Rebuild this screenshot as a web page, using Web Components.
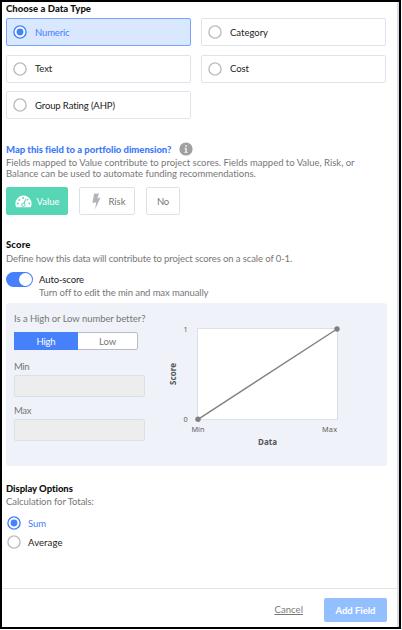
<!DOCTYPE html>
<html lang="en">
<head>
<meta charset="utf-8">
<title>Data field</title>
<style>
html,body{margin:0;height:100%;overflow:hidden;background:#fff}
</style>
</head>
<body>
<field-dialog></field-dialog>
<script>
function define(name, css, html, setup) {
  customElements.define(name, class extends HTMLElement {
    connectedCallback() {
      if (this.shadowRoot) return;
      const root = this.attachShadow({ mode: 'open' });
      root.innerHTML = '<style>:host,*{box-sizing:border-box}' + css + '</style>' + html;
      if (setup) setup(this, root);
    }
  });
}

// One line of text whose tracking is adjusted so that it spans the width in "w".
define('ui-text',
  ':host{display:block;white-space:nowrap;flex:none}span{display:inline-block;text-decoration:inherit}',
  '<span></span>',
  (host, root) => {
    const span = root.querySelector('span');
    span.textContent = host.getAttribute('label');
    const w = parseFloat(host.getAttribute('w'));
    if (w) {
      const natural = span.getBoundingClientRect().width;
      span.style.letterSpacing = ((w - natural) / span.textContent.length) + 'px';
    }
  });

define('ui-radio',
  `:host{display:block;flex:none;width:14px;height:14px}
   svg{display:block}
   circle{fill:#fff;stroke:#bcbcbc;stroke-width:1.4}
   .dot{display:none}
   :host([checked]) circle{stroke:#4680fb}
   :host([checked]) .dot{display:block;fill:#4680fb;stroke:none}`,
  '<svg width="14" height="14" viewBox="0 0 14 14"><circle cx="7" cy="7" r="6.1"/><circle class="dot" cx="7" cy="7" r="3.4"/></svg>');

define('type-option',
  `:host{display:flex;align-items:center;height:28px;border:1px solid #dde4eb;border-radius:2px;background:#fff;padding:0 0 0 6px;gap:8px;color:#222}
   :host([checked]){border-color:#75a5fb;background:#d9e8ff;color:#4680fb}`,
  '<ui-radio></ui-radio><slot></slot>',
  (host, root) => { if (host.hasAttribute('checked')) root.querySelector('ui-radio').setAttribute('checked', ''); });

define('dimension-button',
  `:host{display:flex;align-items:center;justify-content:center;height:28px;border:1px solid #dde1e8;border-radius:2px;background:#fff;color:#777;flex:none}
   :host([selected]){background:#57d6b6;border-color:#57d6b6;color:#fff}`,
  '<slot></slot>');

define('gauge-icon', ':host{display:block;flex:none}svg{display:block}',
  `<svg width="17" height="13" viewBox="0 0 17 13"><path fill="#fff" d="M8.500.6A8 8 0 0 0 .4 8.600Q.4 10.700 1.300 12.200H15.700Q16.600 10.700 16.600 8.600A8 8 0 0 0 8.500.6Z"/>
   <g fill="#57d6b6"><circle cx="2.800" cy="8.500" r=".9"/><circle cx="4.200" cy="5" r=".9"/><circle cx="8.100" cy="3" r=".9"/><circle cx="12.500" cy="4.700" r=".9"/><circle cx="14.300" cy="8.500" r=".9"/></g>
   <path d="M10.500 4.400L8.800 9.200" stroke="#57d6b6" stroke-width="1.100"/><circle cx="8.400" cy="9.800" r="1.700" fill="#fff" stroke="#57d6b6" stroke-width="1"/></svg>`);

define('bolt-icon', ':host{display:block;flex:none}svg{display:block}',
  '<svg width="9" height="17" viewBox="0 0 9 17"><path fill="#b4b4b8" d="M2 .7L7 .5 5.300 5.200 8.500 4.600 3.100 16.300 4.200 9.300.5 10Z"/></svg>');

define('info-icon', ':host{display:block;flex:none}svg{display:block}',
  '<svg width="14" height="14" viewBox="0 0 14 14"><circle cx="7" cy="7" r="6.600" fill="#a0a0a0"/><path fill="#dedede" d="M6 2.900h2v1.900H6zM5.400 5.700H8v4.300h.8v1H5.300v-1H6V6.800h-.6z"/></svg>');

define('ui-switch',
  `:host{display:flex;justify-content:flex-end;width:27px;height:15px;border-radius:8px;background:#4680fb;padding:1px;flex:none}
   i{width:13px;height:13px;border-radius:50%;background:#fff}`,
  '<i></i>');

define('segmented-control',
  `:host{display:flex;width:124px;height:18px;border:1px solid #b9bcc2;border-radius:2px;background:#fff;color:#777}
   ::slotted(*){display:flex;align-items:center;justify-content:center;flex:1}
   ::slotted([on]){background:#4680fb;color:#fff;flex:none;width:64px;margin:-1px 0 -1px -1px}`,
  '<slot></slot>');

define('number-field',
  `:host{display:block;color:#777}
   div{height:22px;width:131px;margin-top:3px;background:#ededed;border:1px solid #dae0e4;border-radius:2px}`,
  '<slot></slot><div></div>');

define('score-chart',
  `:host{display:block;flex:none}svg{display:block;font-family:"Noto Sans","Open Sans",sans-serif;font-size:7.300px;fill:#606060}
   .t{font-weight:700;font-size:8px;fill:#555}`,
  `<svg width="190" height="140" viewBox="160 313 190 140">
    <rect x="197.500" y="328.500" width="140" height="91" fill="#fff" stroke="#dbe1ea"/>
    <path d="M198 419.300L337 329" stroke="#808080" stroke-width="1.400"/>
    <circle cx="198" cy="419.300" r="2.700" fill="#808080"/><circle cx="337" cy="329" r="2.700" fill="#808080"/>
    <text x="183.500" y="331.700">1</text><text x="183.500" y="421.900">0</text>
    <text x="191.500" y="432" textLength="13">Min</text><text x="322" y="432" textLength="15">Max</text>
    <text class="t" x="258" y="445.300" textLength="19">Data</text>
    <text class="t" transform="translate(176.300 385) rotate(-90)" textLength="22">Score</text>
   </svg>`);

define('field-dialog',
  `:host{display:flex;flex-direction:column;width:401px;height:629px;border:2px solid #000;font:9.500px/11px Lato,"Open Sans",sans-serif;color:#777;background:#fff}
   main{flex:1;min-height:0;border-right:2px solid #d9dce2;padding:1px 0 0 4px;display:flex;flex-direction:column}
   .h{font-weight:900;color:#111}
   .types{display:grid;grid-template-columns:185px 185px;gap:8.500px 10px;margin-top:4px}
   .q{display:flex;gap:8px;align-items:center;height:14px;margin-top:23px;color:#3d7afa;font-weight:900}
   .dims{display:flex;gap:11px;margin-top:8px}
   .auto{display:flex;gap:6px;margin-top:8px}
   .auto>div{padding-top:2px}
   .dark{color:#222}
   .panel{display:flex;flex:none;background:#eff2f8;border-radius:3px;width:381px;height:163px;margin-top:5px;padding:10px 0 0 8px}
   .left{width:146px;flex:none}
   .row{display:flex;align-items:center;gap:7px;padding-left:1px}
   .on{color:#4680fb}
   footer{display:flex;justify-content:flex-end;align-items:center;gap:21px;height:39px;flex:none;border-top:1px solid #e5e5e5;border-right:2px solid #d9dce2;padding:6px 10px 0 0;align-items:flex-start}
   .cancel{text-decoration:underline;margin-top:9px;height:11px;padding-top:0;margin-top:9px}
   .add{width:63px;height:24px;margin-top:3px;border-radius:2px;background:#94bfff;color:#fff;font-weight:700;display:flex;align-items:center;justify-content:center}`,
  `<main>
    <ui-text class="h" label="Choose a Data Type" w="85"></ui-text>
    <div class="types">
      <type-option checked><ui-text label="Numeric" w="34.500"></ui-text></type-option>
      <type-option><ui-text label="Category" w="38"></ui-text></type-option>
      <type-option><ui-text label="Text" w="17"></ui-text></type-option>
      <type-option><ui-text label="Cost" w="19"></ui-text></type-option>
      <type-option><ui-text label="Group Rating (AHP)" w="80"></ui-text></type-option>
    </div>
    <div class="q"><ui-text label="Map this field to a portfolio dimension?" w="165"></ui-text><info-icon></info-icon></div>
    <ui-text label="Fields mapped to Value contribute to project scores. Fields mapped to Value, Risk, or" w="348.500" style="margin-top:1px"></ui-text>
    <ui-text label="Balance can be used to automate funding recommendations." w="250"></ui-text>
    <div class="dims">
      <dimension-button selected style="width:62px;gap:5px"><gauge-icon></gauge-icon><ui-text label="Value" w="23"></ui-text></dimension-button>
      <dimension-button style="width:56px;gap:8px;padding-left:3px"><bolt-icon></bolt-icon><ui-text label="Risk" w="17"></ui-text></dimension-button>
      <dimension-button style="width:34px"><ui-text label="No" w="12"></ui-text></dimension-button>
    </div>
    <ui-text class="h" label="Score" w="24.500" style="margin-top:24px"></ui-text>
    <ui-text label="Define how this data will contribute to project scores on a scale of 0-1." w="286" style="margin-top:3px"></ui-text>
    <div class="auto"><ui-switch></ui-switch><div>
      <ui-text class="dark" label="Auto-score" w="45"></ui-text>
      <ui-text label="Turn off to edit the min and max manually" w="169" style="margin-top:2px"></ui-text></div></div>
    <div class="panel">
      <div class="left">
        <ui-text label="Is a High or Low number better?" w="131"></ui-text>
        <segmented-control style="margin-top:8px"><div on><ui-text label="High" w="19"></ui-text></div><div><ui-text label="Low" w="17"></ui-text></div></segmented-control>
        <number-field style="margin-top:11px"><ui-text label="Min" w="15"></ui-text></number-field>
        <number-field style="margin-top:8px"><ui-text label="Max" w="17"></ui-text></number-field>
      </div>
      <score-chart></score-chart>
    </div>
    <ui-text class="h" label="Display Options" w="67" style="margin-top:17px"></ui-text>
    <ui-text label="Calculation for Totals:" w="88" style="margin-top:2px"></ui-text>
    <div class="row on" style="margin-top:9px"><ui-radio checked></ui-radio><ui-text label="Sum" w="18"></ui-text></div>
    <div class="row dark" style="margin-top:5px"><ui-radio></ui-radio><ui-text label="Average" w="34.500"></ui-text></div>
  </main>
  <footer><ui-text class="cancel" label="Cancel" w="28.500"></ui-text><div class="add"><ui-text label="Add Field" w="40"></ui-text></div></footer>`);
</script>
</body>
</html>
